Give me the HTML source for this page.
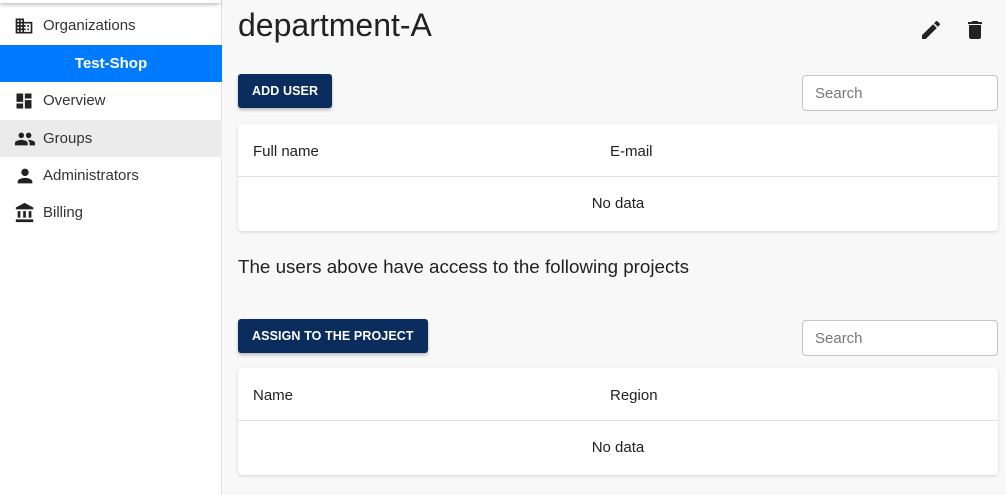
<!DOCTYPE html>
<html><head><style>
*{box-sizing:border-box;margin:0;padding:0}
body{width:1006px;height:495px;overflow:hidden;background:#f8f8f8;font-family:"Liberation Sans",Roboto,sans-serif;color:#212121;position:relative}
.side{position:absolute;left:0;top:0;width:222px;height:495px;background:#fff;border-right:1px solid #e0e0e0}
.shadow{position:absolute;left:0;top:0;width:220px;height:3px;box-shadow:0 1px 4px rgba(0,0,0,.4)}
.item{position:absolute;left:0;width:222px;height:37px;display:flex;align-items:center;font-size:15px;color:#333}
.item svg{position:absolute;left:14px}
.item span{position:absolute;left:43px;top:10px}
.sel{background:#007bff;color:#fff;justify-content:center;font-weight:bold;padding-left:0}
.grp{background:#ebebeb}
.title{position:absolute;left:238px;top:7px;font-size:32px;color:#222}
.btn{position:absolute;left:238px;height:34px;background:#0a2d5e;color:#fff;font-size:12.5px;font-weight:bold;letter-spacing:.1px;display:flex;align-items:center;padding:0 14px;border-radius:3px;box-shadow:0 2px 3px rgba(0,0,0,.25)}
.search{position:absolute;left:802px;width:196px;height:36px;border:1px solid #c4c4c4;border-radius:4px;background:#fff;font-size:15px;color:#777;padding:9px 12px}
.card{position:absolute;left:238px;width:760px;height:107px;background:#fff;border-radius:4px;box-shadow:0 1px 3px rgba(0,0,0,.15)}
.card .h{height:53px;border-bottom:1px solid #e0e0e0;position:relative;font-size:15px}
.card .h b{font-weight:normal;position:absolute;top:19px}
.card .nd{text-align:center;font-size:15px;padding-top:18px}
.sub{position:absolute;left:238px;top:256px;font-size:18.8px;color:#222}
.ic{position:absolute;top:18px}
</style></head><body>
<div class="side">
<div class="shadow"></div>
<div class="item" style="top:7px"><svg width="20" height="20" viewBox="0 0 24 24"><path fill="#222" d="M12 7V3H2v18h20V7H12zM6 19H4v-2h2v2zm0-4H4v-2h2v2zm0-4H4V9h2v2zm0-4H4V5h2v2zm4 12H8v-2h2v2zm0-4H8v-2h2v2zm0-4H8V9h2v2zm0-4H8V5h2v2zm10 12h-8v-2h2v-2h-2v-2h2v-2h-2V9h8v10zm-2-8h-2v2h2v-2zm0 4h-2v2h2v-2z"/></svg><span>Organizations</span></div>
<div class="item sel" style="top:45px">Test-Shop</div>
<div class="item" style="top:82px"><svg width="20" height="20" viewBox="0 0 24 24"><path fill="#222" d="M3 13h8V3H3v10zm0 8h8v-6H3v6zm10 0h8V11h-8v10zm0-18v6h8V3h-8z"/></svg><span>Overview</span></div>
<div class="item grp" style="top:120px"><svg width="22" height="22" viewBox="0 0 24 24"><path fill="#222" d="M16 11c1.66 0 2.99-1.34 2.99-3S17.66 5 16 5c-1.66 0-3 1.34-3 3s1.34 3 3 3zm-8 0c1.66 0 2.99-1.34 2.990-3S9.66 5 8 5C6.34 5 5 6.34 5 8s1.340 3 3 3zm0 2c-2.33 0-7 1.17-7 3.5V19h14v-2.5c0-2.33-4.67-3.5-7-3.5zm8 0c-.29 0-.62.02-.97.05 1.16.84 1.97 1.97 1.97 3.450V19h6v-2.5c0-2.33-4.67-3.5-7-3.5z"/></svg><span>Groups</span></div>
<div class="item" style="top:157px"><svg width="22" height="22" viewBox="0 0 24 24"><path fill="#222" d="M12 12c2.21 0 4-1.79 4-4s-1.79-4-4-4-4 1.79-4 4 1.79 4 4 4zm0 2c-2.67 0-8 1.34-8 4v2h16v-2c0-2.66-5.33-4-8-4z"/></svg><span>Administrators</span></div>
<div class="item" style="top:194px"><svg width="22" height="22" viewBox="0 0 24 24"><path fill="#222" d="M4 10v7h3v-7H4zm6 0v7h3v-7h-3zM2 22h19v-3H2v3zm14-12v7h3v-7h-3zm-4.5-9L2 6v2h19V6l-9.5-5z"/></svg><span>Billing</span></div>
</div>
<div class="title">department-A</div>
<svg class="ic" style="left:919px" width="24" height="24" viewBox="0 0 24 24"><path fill="#222" d="M3 17.25V21h3.75L17.81 9.94l-3.75-3.75L3 17.25zM20.71 7.04a1 1 0 000-1.41l-2.34-2.34a1 1 0 00-1.41 0l-1.83 1.83 3.75 3.75 1.83-1.83z"/></svg>
<svg class="ic" style="left:963px" width="24" height="24" viewBox="0 0 24 24"><path fill="#222" d="M6 19c0 1.1.9 2 2 2h8c1.1 0 2-.9 2-2V7H6v12zM19 4h-3.5l-1-1h-5l-1 1H5v2h14V4z"/></svg>
<div class="btn" style="top:74px">ADD USER</div>
<div class="search" style="top:75px">Search</div>
<div class="card" style="top:124px"><div class="h"><b style="left:15px">Full name</b><b style="left:372px">E-mail</b></div><div class="nd">No data</div></div>
<div class="sub">The users above have access to the following projects</div>
<div class="btn" style="top:319px">ASSIGN TO THE PROJECT</div>
<div class="search" style="top:320px">Search</div>
<div class="card" style="top:368px"><div class="h"><b style="left:15px">Name</b><b style="left:372px">Region</b></div><div class="nd">No data</div></div>
</body></html>
